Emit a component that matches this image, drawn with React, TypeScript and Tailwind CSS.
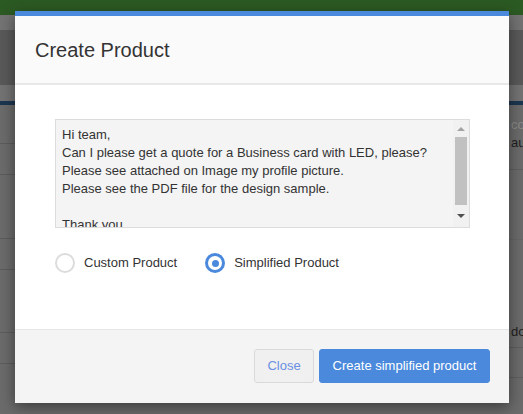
import React from "react";

const font = "font-['Liberation_Sans',Arial,Helvetica,sans-serif]";

function LeftStrip() {
  return (
    <div className="flex w-[15px] flex-col">
      <div className="h-[15px] bg-[#2c5a23]" />
      <div className="h-[15px] bg-[#737373]" />
      <div className="h-[55px] bg-[#595959]" />
      <div className="h-[16px] bg-[#737373]" />
      <div className="h-[4px] bg-[#1c3650]" />
      <div className="h-[39px] border-b border-[#5c5c5c] bg-[#6b6b6b]" />
      <div className="h-[31px] border-b border-[#5c5c5c] bg-[#6b6b6b]" />
      <div className="h-[64px] border-b border-[#5c5c5c] bg-[#6b6b6b]" />
      <div className="h-[31px] border-b border-[#5c5c5c] bg-[#6b6b6b]" />
      <div className="h-[63px] border-b border-[#5c5c5c] bg-[#6b6b6b]" />
      <div className="h-[31px] border-b border-[#5c5c5c] bg-[#6b6b6b]" />
      <div className="flex-1 bg-[#6b6b6b]" />
    </div>
  );
}

function RightStrip() {
  return (
    <div className={`flex w-[14px] flex-col overflow-hidden ${font} text-[13px]`}>
      <div className="h-[15px] bg-[#2c5a23]" />
      <div className="h-[15px] bg-[#737373]" />
      <div className="h-[55px] bg-[#595959]" />
      <div className="h-[16px] bg-[#737373]" />
      <div className="h-[4px] bg-[#1c3650]" />
      <div className="flex h-[65px] flex-col border-b border-[#5f5f5f] bg-[#6b6b6b] pl-[2px] pt-[11px] leading-[18px]">
        <span className="whitespace-nowrap text-[#8a8a8a]">co</span>
        <span className="whitespace-nowrap text-[#1e1e1e]">au</span>
      </div>
      <div className="h-[70px] border-b border-[#666] bg-[#6b6b6b]" />
      <div className="flex h-[108px] items-end border-b border-[#5f5f5f] bg-[#6b6b6b] pb-[6px] pl-[2px]">
        <span className="whitespace-nowrap leading-[18px] text-[#1e1e1e]">do</span>
      </div>
      <div className="h-[30px] border-b border-[#5f5f5f] bg-[#6b6b6b]" />
      <div className="flex-1 bg-[#6b6b6b]" />
    </div>
  );
}

function Scrollbar() {
  return (
    <div className="absolute right-0 top-0 flex h-full w-[16px] flex-col items-center bg-[#f1f1f1]">
      <div className="flex h-[17px] w-full items-center justify-center">
        <svg width="8" height="5" viewBox="0 0 8 5">
          <path d="M0 5 L4 1 L8 5 Z" fill="#a3a3a3" />
        </svg>
      </div>
      <div className="h-[68px] w-[12px] bg-[#c1c1c1]" />
      <div className="flex flex-1 items-center justify-center">
        <svg width="8" height="5" viewBox="0 0 8 5">
          <path d="M0 0 L8 0 L4 4 Z" fill="#505050" />
        </svg>
      </div>
    </div>
  );
}

function Radio({ checked, label }: { checked: boolean; label: string }) {
  return (
    <label className="flex items-center gap-[9px]">
      {checked ? (
        <span className="flex h-[20px] w-[20px] items-center justify-center rounded-full border-[3px] border-[#4a89dc] bg-white">
          <span className="h-[7px] w-[7px] rounded-full bg-[#4a89dc]" />
        </span>
      ) : (
        <span className="h-[20px] w-[20px] rounded-full border-2 border-[#dcdcdc] bg-white" />
      )}
      <span className="text-[13px] text-[#333]">{label}</span>
    </label>
  );
}

export default function App() {
  return (
    <div className={`relative flex h-[414px] w-[523px] overflow-hidden bg-[#6b6b6b] ${font}`}>
      <LeftStrip />
      <div className="flex w-[494px] flex-col">
        <div className="h-[11px] bg-[#2c5a23]" />
      </div>
      <RightStrip />

      <div className="absolute left-[15px] top-[11px] flex w-[494px] flex-col bg-white shadow-[0_4px_14px_rgba(0,0,0,0.45)]">
        <div className="h-[5px] bg-[#4a89dc]" />
        <div className="flex h-[69px] items-center border-b-2 border-[#e8e8e8] bg-[#fafafa] px-[20px]">
          <h1 className="text-[20px] font-normal text-[#333]">Create Product</h1>
        </div>
        <div className="flex h-[244px] flex-col bg-white px-[40px] pt-[34px]">
          <div className="relative h-[109px] w-[415px] overflow-hidden border border-[#dcdcdc] bg-[#f4f4f4]">
            <div className="pl-[6px] pr-[20px] pt-[6px] text-[13px] leading-[18px] text-[#333]">
              <div>Hi team,</div>
              <div>Can I please get a quote for a Business card with LED, please?</div>
              <div>Please see attached on Image my profile picture.</div>
              <div>Please see the PDF file for the design sample.</div>
              <div>&nbsp;</div>
              <div>Thank you</div>
            </div>
            <Scrollbar />
          </div>
          <div className="mt-[25px] flex items-center gap-[28px]">
            <Radio checked={false} label="Custom Product" />
            <Radio checked={true} label="Simplified Product" />
          </div>
        </div>
        <div className="flex h-[74px] items-center justify-end gap-[5px] border-t border-[#e6e6e6] bg-[#f4f4f4] pr-[19px] pb-[1px]">
          <button className="flex h-[34px] w-[60px] items-center justify-center rounded-[3px] border border-[#dadada] bg-[#f0f0f0] text-[13px] text-[#6a8fe2]">
            Close
          </button>
          <button className="flex h-[34px] w-[171px] items-center justify-center rounded-[3px] border border-[#4a89dc] bg-[#4a89dc] text-[13px] text-white">
            Create simplified product
          </button>
        </div>
      </div>
    </div>
  );
}
